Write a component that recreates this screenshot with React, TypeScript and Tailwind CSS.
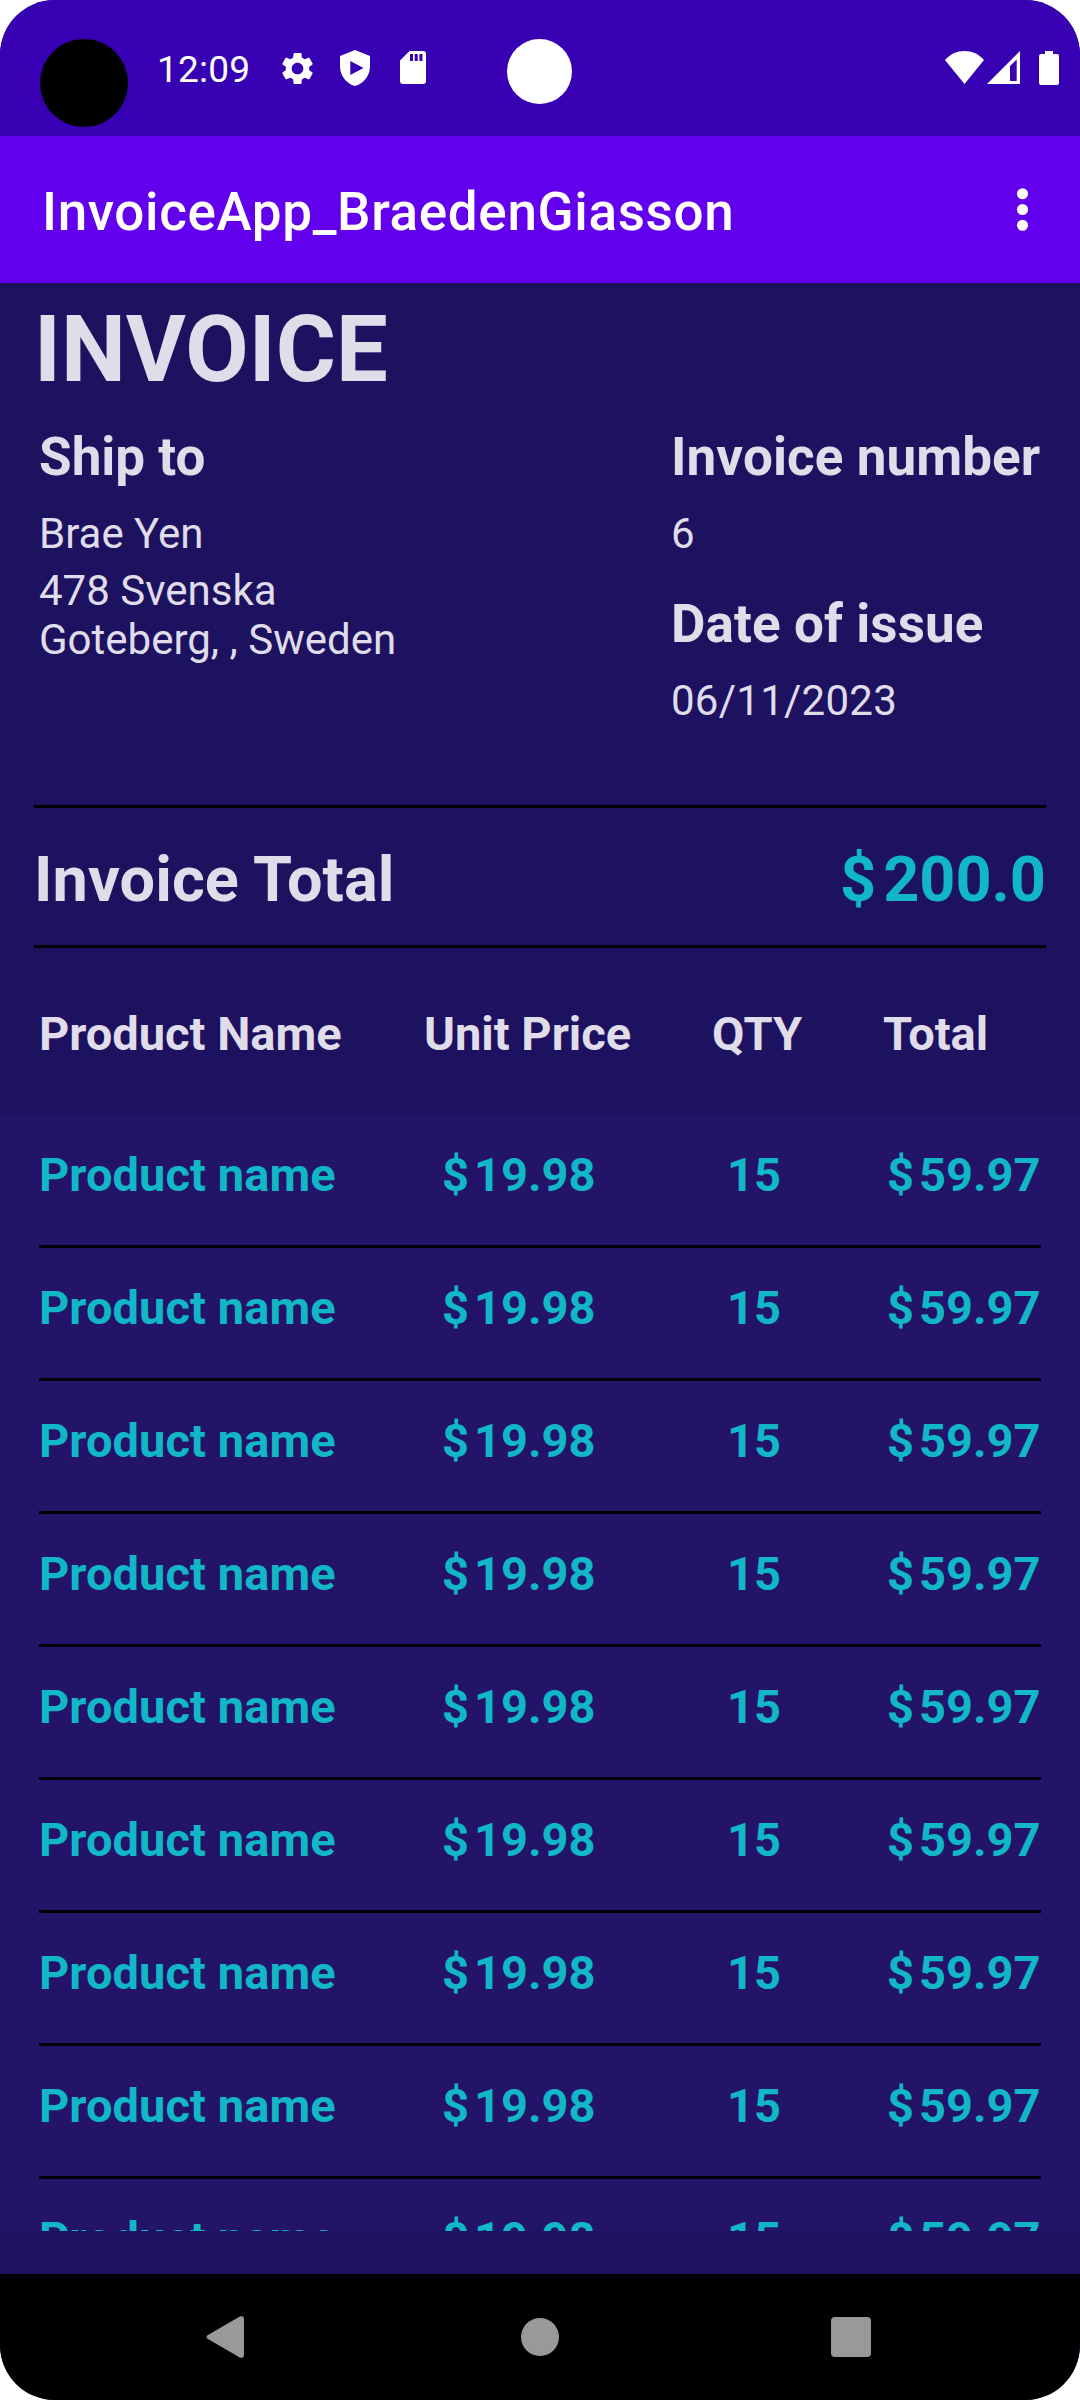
import React from "react";

const headerCells = ["Product Name", "Unit Price", "QTY", "Total"];
const items = Array.from({ length: 9 }, () => ({
  name: "Product name",
  price: "19.98",
  qty: "15",
  total: "59.97",
}));

function StatusBar() {
  return (
    <div className="relative flex h-[136px] shrink-0 items-start bg-[#3700b3] text-white">
      <div className="ml-[40px] mt-[39px] size-[88px] rounded-full bg-black" />
      <span className="ml-[29px] mt-[48px] w-[97px] text-[37px] leading-[43px] tracking-[0.2px] whitespace-nowrap">12:09</span>
      <svg className="ml-[24px] mt-[49px] size-[39px]" viewBox="0 0 24 24" fill="currentColor">
        <path d="M19.14 12.94c.04-.3.06-.61.06-.94 0-.32-.02-.64-.07-.94l2.03-1.58a.49.49 0 0 0 .12-.61l-1.92-3.32a.488.488 0 0 0-.59-.22l-2.39.96c-.5-.38-1.03-.7-1.62-.94l-.36-2.54a.484.484 0 0 0-.48-.41h-3.84c-.24 0-.43.17-.47.41l-.36 2.54c-.59.24-1.13.57-1.62.94l-2.39-.96c-.22-.08-.47 0-.59.22L2.74 8.87c-.12.21-.08.47.12.61l2.03 1.58c-.05.3-.09.63-.09.94s.02.64.07.94l-2.03 1.58a.49.49 0 0 0-.12.61l1.92 3.32c.12.22.37.29.59.22l2.39-.96c.5.38 1.03.7 1.62.94l.36 2.54c.05.24.24.41.48.41h3.84c.24 0 .44-.17.47-.41l.36-2.54c.59-.24 1.13-.56 1.62-.94l2.39.96c.22.08.47 0 .59-.22l1.92-3.32c.12-.22.07-.47-.12-.61l-2.01-1.58zM12 15.6c-1.98 0-3.6-1.62-3.6-3.6s1.62-3.6 3.6-3.6 3.6 1.62 3.6 3.6-1.62 3.6-3.6 3.6z" />
      </svg>
      <svg className="ml-[23px] mt-[50px] h-[36px] w-[30px]" viewBox="0 0 30 36" fill="currentColor">
        <path fillRule="evenodd" d="M15 0L0 6v10.500C0 25.500 6.400 33.900 15 36c8.600-2.100 15-10.500 15-19.500V6zM10.300 11v14L23.500 18z" />
      </svg>
      <svg className="ml-[30px] mt-[51px] h-[33px] w-[26px]" viewBox="0 0 26 33" fill="currentColor">
        <path fillRule="evenodd" d="M9.500 0H23a3 3 0 0 1 3 3v27a3 3 0 0 1-3 3H3a3 3 0 0 1-3-3V9.500zM10 3v7h3V3zM14.700 3v7h3V3zM19.400 3v7h3V3z" />
      </svg>
      <div className="ml-[81px] mt-[39px] size-[65px] rounded-full bg-white" />
      <svg className="ml-[373px] mt-[51px] h-[33px] w-[39px]" viewBox="0 0 39 33" fill="currentColor">
        <path d="M19.500 0C12 0 5 3.200 0 9l19.500 24L39 9C34 3.200 27 0 19.500 0z" />
      </svg>
      <svg className="ml-[3px] mt-[51px] h-[33px] w-[33px]" viewBox="0 0 33 33" fill="currentColor">
        <path fillRule="evenodd" d="M0 33L33 0v33zM23 15v15h6.700V8.500z" />
      </svg>
      <svg className="ml-[19px] mt-[51px] h-[34px] w-[20px]" viewBox="0 0 20 34" fill="currentColor">
        <path d="M6 0h8v3h4a2 2 0 0 1 2 2v27a2 2 0 0 1-2 2H2a2 2 0 0 1-2-2V5a2 2 0 0 1 2-2h4z" />
      </svg>
    </div>
  );
}

function AppBar() {
  return (
    <div className="flex h-[147px] shrink-0 items-center justify-between bg-[#6200ee] pr-[26px] pl-[42px] text-white">
      <h1 className="mt-[4px] text-[53px] leading-[62px] font-medium tracking-[0.64px] whitespace-nowrap">InvoiceApp_BraedenGiasson</h1>
      <svg className="size-[63px]" viewBox="0 0 24 24" fill="currentColor">
        <circle cx="12" cy="6" r="2.100" />
        <circle cx="12" cy="12" r="2.100" />
        <circle cx="12" cy="18" r="2.100" />
      </svg>
    </div>
  );
}

function Field({ label, value }: { label: string; value: string }) {
  return (
    <div>
      <h3 className="text-[53px] leading-[62px] font-bold tracking-[0.08px] whitespace-nowrap">{label}</h3>
      <p className="mt-[21px] text-[42px] leading-[49px] tracking-[0.25px]">{value}</p>
    </div>
  );
}

function Money({ amount, gap }: { amount: string; gap: string }) {
  return (
    <span className="flex whitespace-nowrap">
      <span className={gap}>$</span>
      <span>{amount}</span>
    </span>
  );
}

function NavBar() {
  return (
    <div className="flex h-[126px] shrink-0 items-center bg-black text-[#999999]">
      <svg className="ml-[206px] h-[42px] w-[38px]" viewBox="0 0 38 42" fill="currentColor">
        <path d="M1.500 19.300L33.800.600Q38-1 38 3.500v35q0 4.500-4.200 2.900L1.500 22.700q-2-1.700 0-3.400z" />
      </svg>
      <div className="ml-[277px] size-[38px] rounded-full bg-[#999999]" />
      <div className="ml-[272px] size-[40px] rounded-[4px] bg-[#999999]" />
    </div>
  );
}

export default function App() {
  return (
    <div className="h-[2400px] w-[1080px] bg-white">
      <div className="flex h-full w-full flex-col overflow-hidden rounded-[55px] bg-[#1c1260] font-['Roboto',sans-serif] text-[#e0dcea]">
        <StatusBar />
        <AppBar />
        <div className="h-[10px] shrink-0 bg-linear-to-b from-[#1a1159] to-[#1c1260]" />

        <div className="flex h-[1981px] flex-col">
          <h2 className="mt-[2px] pl-[34px] text-[92px] leading-[110px] font-bold">INVOICE</h2>

          <div className="mt-[21px] flex h-[379px] justify-between pr-[39px] pl-[39px]">
            <div>
              <h3 className="text-[53px] leading-[62px] font-bold">Ship to</h3>
              <p className="mt-[21px] text-[42px] leading-[49px]">Brae Yen</p>
              <p className="mt-[8px] text-[42px] leading-[49px]">
                478 Svenska
                <br />
                Goteberg, , Sweden
              </p>
            </div>
            <div className="flex w-[370px] flex-col gap-[35px]">
              <Field label="Invoice number" value="6" />
              <Field label="Date of issue" value="06/11/2023" />
            </div>
          </div>

          <div className="mx-[34px] flex h-[143px] shrink-0 items-start justify-between border-y-[3px] border-black pt-[35px] text-[63px] leading-[74px] font-bold">
            <span className="tracking-[0.1px]">Invoice Total</span>
            <span className="text-[#11b7c7]">
              <Money amount="200.0" gap="mr-[7px]" />
            </span>
          </div>

          <div className="grid h-[167px] shrink-0 grid-cols-[385px_288px_171px_1fr] pt-[58px] pl-[39px] text-[47px] leading-[55px] font-bold">
            {headerCells.map((h) => (
              <span key={h}>{h}</span>
            ))}
          </div>

          <div className="h-[1116px] shrink-0 overflow-hidden bg-[#231469] px-[39px] text-[47px] leading-[55px] font-bold text-[#11b7c7]">
            {items.map((it, i) => (
              <div key={i} className="grid h-[133px] grid-cols-[403px_285px_160px_1fr] border-b-[3px] border-black pt-[32px]">
                <span className="tracking-[0.08px]">{it.name}</span>
                <Money amount={it.price} gap="mr-[5px]" />
                <span>{it.qty}</span>
                <Money amount={it.total} gap="mr-[5px]" />
              </div>
            ))}
          </div>
        </div>
        <NavBar />
      </div>
    </div>
  );
}
